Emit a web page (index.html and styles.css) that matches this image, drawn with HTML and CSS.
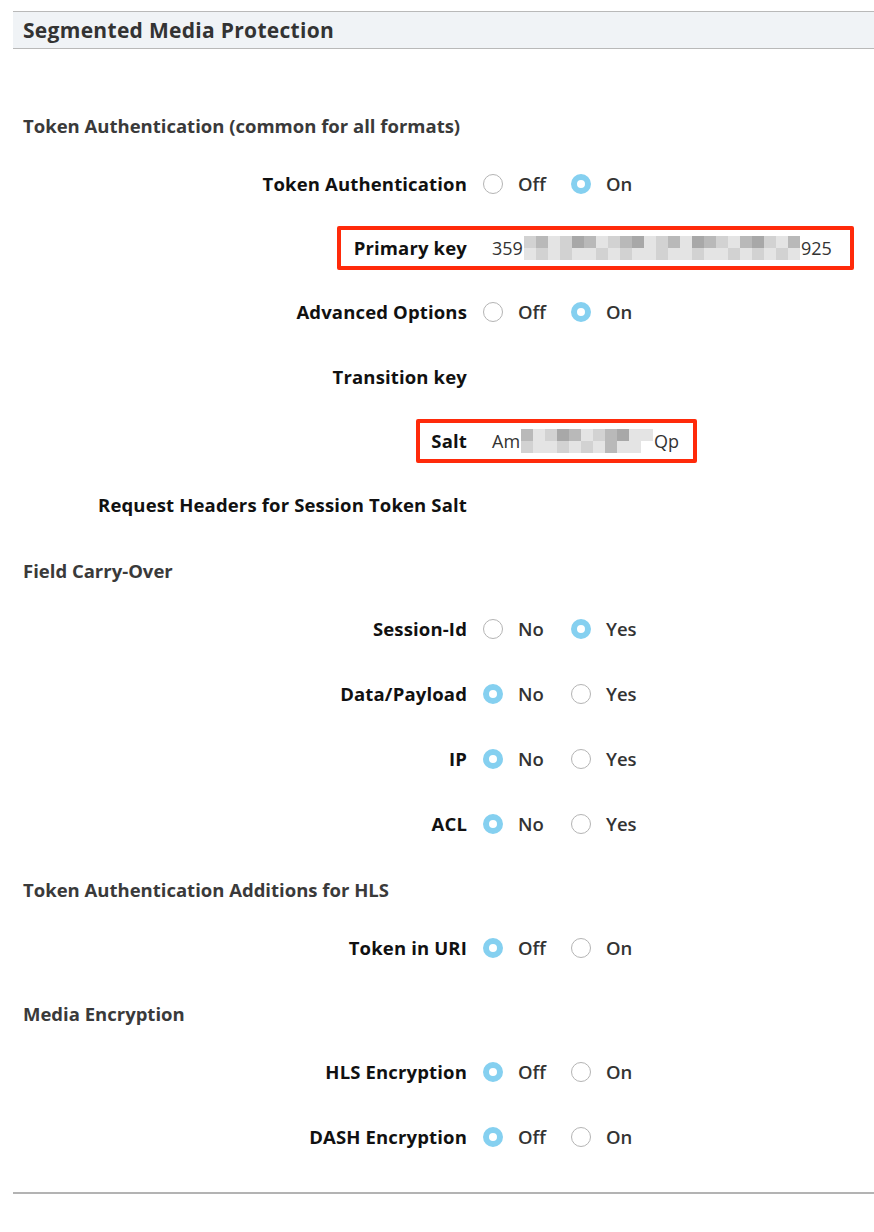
FILE: index.html
```html
<!DOCTYPE html>
<html>
<head>
<meta charset="utf-8">
<link rel="stylesheet" href="styles.css">
</head>
<body>
<div class="page">
  <div class="panel-header">Segmented Media Protection</div>

  <div class="form">
    <div class="section-title first">Token Authentication (common for all formats)</div>

    <div class="row">
      <div class="label">Token Authentication</div>
      <div class="control">
        <span class="opt"><span class="radio"></span><span class="opt-text">Off</span></span>
        <span class="opt"><span class="radio checked"></span><span class="opt-text">On</span></span>
      </div>
    </div>

    <div class="row boxed">
      <div class="box box-primary">
        <div class="label">Primary key</div>
        <div class="value">359<span class="blur blur-long"><i class="b1"></i><i class="b2"></i><i class="b3"></i><i class="b1"></i><i class="b4"></i><i class="b2"></i><i class="b3"></i><i class="b1"></i><i class="b2"></i><i class="b4"></i><i class="b3"></i><i class="b1"></i><i class="b2"></i><i class="b3"></i><i class="b4"></i><i class="b2"></i><i class="b1"></i><i class="b3"></i><i class="b2"></i><i class="b4"></i><i class="b1"></i><i class="b3"></i><i class="b2"></i><i class="b3"></i><i class="b1"></i><i class="b3"></i><i class="b1"></i><i class="b3"></i><i class="b3"></i><i class="b1"></i><i class="b3"></i><i class="b1"></i><i class="b3"></i><i class="b3"></i><i class="b1"></i><i class="b3"></i><i class="b3"></i><i class="b1"></i><i class="b3"></i><i class="b3"></i><i class="b1"></i><i class="b3"></i><i class="b1"></i><i class="b3"></i><i class="b1"></i><i class="b3"></i></span>925</div>
      </div>
    </div>

    <div class="row">
      <div class="label">Advanced Options</div>
      <div class="control">
        <span class="opt"><span class="radio"></span><span class="opt-text">Off</span></span>
        <span class="opt"><span class="radio checked"></span><span class="opt-text">On</span></span>
      </div>
    </div>

    <div class="row">
      <div class="label">Transition key</div>
    </div>

    <div class="row boxed">
      <div class="box box-salt">
        <div class="label">Salt</div>
        <div class="value">Am<span class="blur blur-short"><i class="b2"></i><i class="b3"></i><i class="b1"></i><i class="b4"></i><i class="b2"></i><i class="b3"></i><i class="b1"></i><i class="b2"></i><i class="b4"></i><i class="b3"></i><i class="b3"></i><i class="b1"></i><i class="b3"></i><i class="b3"></i><i class="b1"></i><i class="b3"></i><i class="b1"></i><i class="b3"></i><i class="b2"></i><i class="b3"></i><i class="b3"></i></span>Qp</div>
      </div>
    </div>

    <div class="row">
      <div class="label">Request Headers for Session Token Salt</div>
    </div>

    <div class="section-title">Field Carry-Over</div>

    <div class="row">
      <div class="label">Session-Id</div>
      <div class="control">
        <span class="opt"><span class="radio"></span><span class="opt-text">No</span></span>
        <span class="opt"><span class="radio checked"></span><span class="opt-text">Yes</span></span>
      </div>
    </div>
    <div class="row">
      <div class="label">Data/Payload</div>
      <div class="control">
        <span class="opt"><span class="radio checked"></span><span class="opt-text">No</span></span>
        <span class="opt"><span class="radio"></span><span class="opt-text">Yes</span></span>
      </div>
    </div>
    <div class="row">
      <div class="label">IP</div>
      <div class="control">
        <span class="opt"><span class="radio checked"></span><span class="opt-text">No</span></span>
        <span class="opt"><span class="radio"></span><span class="opt-text">Yes</span></span>
      </div>
    </div>
    <div class="row">
      <div class="label">ACL</div>
      <div class="control">
        <span class="opt"><span class="radio checked"></span><span class="opt-text">No</span></span>
        <span class="opt"><span class="radio"></span><span class="opt-text">Yes</span></span>
      </div>
    </div>

    <div class="section-title">Token Authentication Additions for HLS</div>

    <div class="row">
      <div class="label">Token in URI</div>
      <div class="control">
        <span class="opt"><span class="radio checked"></span><span class="opt-text">Off</span></span>
        <span class="opt"><span class="radio"></span><span class="opt-text">On</span></span>
      </div>
    </div>

    <div class="section-title">Media Encryption</div>

    <div class="row">
      <div class="label">HLS Encryption</div>
      <div class="control">
        <span class="opt"><span class="radio checked"></span><span class="opt-text">Off</span></span>
        <span class="opt"><span class="radio"></span><span class="opt-text">On</span></span>
      </div>
    </div>
    <div class="row">
      <div class="label">DASH Encryption</div>
      <div class="control">
        <span class="opt"><span class="radio checked"></span><span class="opt-text">Off</span></span>
        <span class="opt"><span class="radio"></span><span class="opt-text">On</span></span>
      </div>
    </div>
  </div>

  <div class="panel-footer"></div>
</div>
</body>
</html>
```

FILE: styles.css
```css
* { box-sizing: border-box; }

html, body {
  margin: 0;
  padding: 0;
  background: #ffffff;
}

body {
  font-family: "Open Sans", "Lato", sans-serif;
  color: #222;
}

.page {
  padding: 11px 0 0 13px;
}

.panel-header {
  height: 38px;
  background: #f0f3f6;
  border-top: 1px solid #b9b9b9;
  border-bottom: 1px solid #b9b9b9;
  padding-left: 10px;
  font-size: 21px;
  font-weight: 700;
  color: #333;
  line-height: 36px;
  letter-spacing: 0.3px;
}

.form {
  display: flex;
  flex-direction: column;
}

.section-title {
  height: 36px;
  line-height: 36px;
  margin-top: 16px;
  margin-bottom: 7px;
  padding-left: 10px;
  font-size: 18.5px;
  font-weight: 700;
  color: #3a3a3a;
}

.section-title.first {
  margin-top: 59px;
}

.row {
  height: 65px;
  display: grid;
  grid-template-columns: 454px 1fr;
  column-gap: 16px;
  align-items: center;
}

.row.boxed {
  height: 63px;
  display: flex;
}

.label {
  text-align: right;
  font-size: 18.5px;
  font-weight: 700;
  color: #111;
  white-space: nowrap;
  letter-spacing: 0.15px;
}

.control {
  display: flex;
  align-items: center;
}

.opt {
  display: inline-flex;
  align-items: center;
  width: 88px;
}

.radio {
  width: 20px;
  height: 20px;
  border-radius: 50%;
  border: 1px solid #b4b4b4;
  background: #fff;
  flex: none;
}

.radio.checked {
  border: 6px solid #85d0f0;
}

.opt-text {
  margin-left: 15px;
  font-size: 18.5px;
  font-weight: 600;
  color: #333;
}

.box {
  display: flex;
  align-items: center;
  height: 44px;
  border: 4px solid #ff2a0a;
  border-radius: 2px;
}

.box-primary {
  margin-left: 324px;
  width: 517px;
}

.box-primary .label {
  width: 126px;
}

.box-salt {
  margin-left: 403px;
  width: 281px;
}

.box-salt .label {
  width: 47px;
}

.value {
  display: flex;
  align-items: center;
  margin-left: 25px;
  font-size: 18px;
  font-weight: 400;
  color: #333;
}

.blur {
  display: inline-flex;
  flex-wrap: wrap;
  height: 24px;
  margin: 0 1px;
}

.blur i {
  display: block;
  width: 12px;
  height: 12px;
}

.blur-long { width: 276px; }
.blur-short { width: 132px; }

.b1 { background: #d2d2d2; }
.b2 { background: #b9b9b9; }
.b3 { background: #e4e4e4; }
.b4 { background: #a8a8a8; }

.panel-footer {
  margin-top: 23px;
  border-top: 2px solid #b3b3b3;
}
```
